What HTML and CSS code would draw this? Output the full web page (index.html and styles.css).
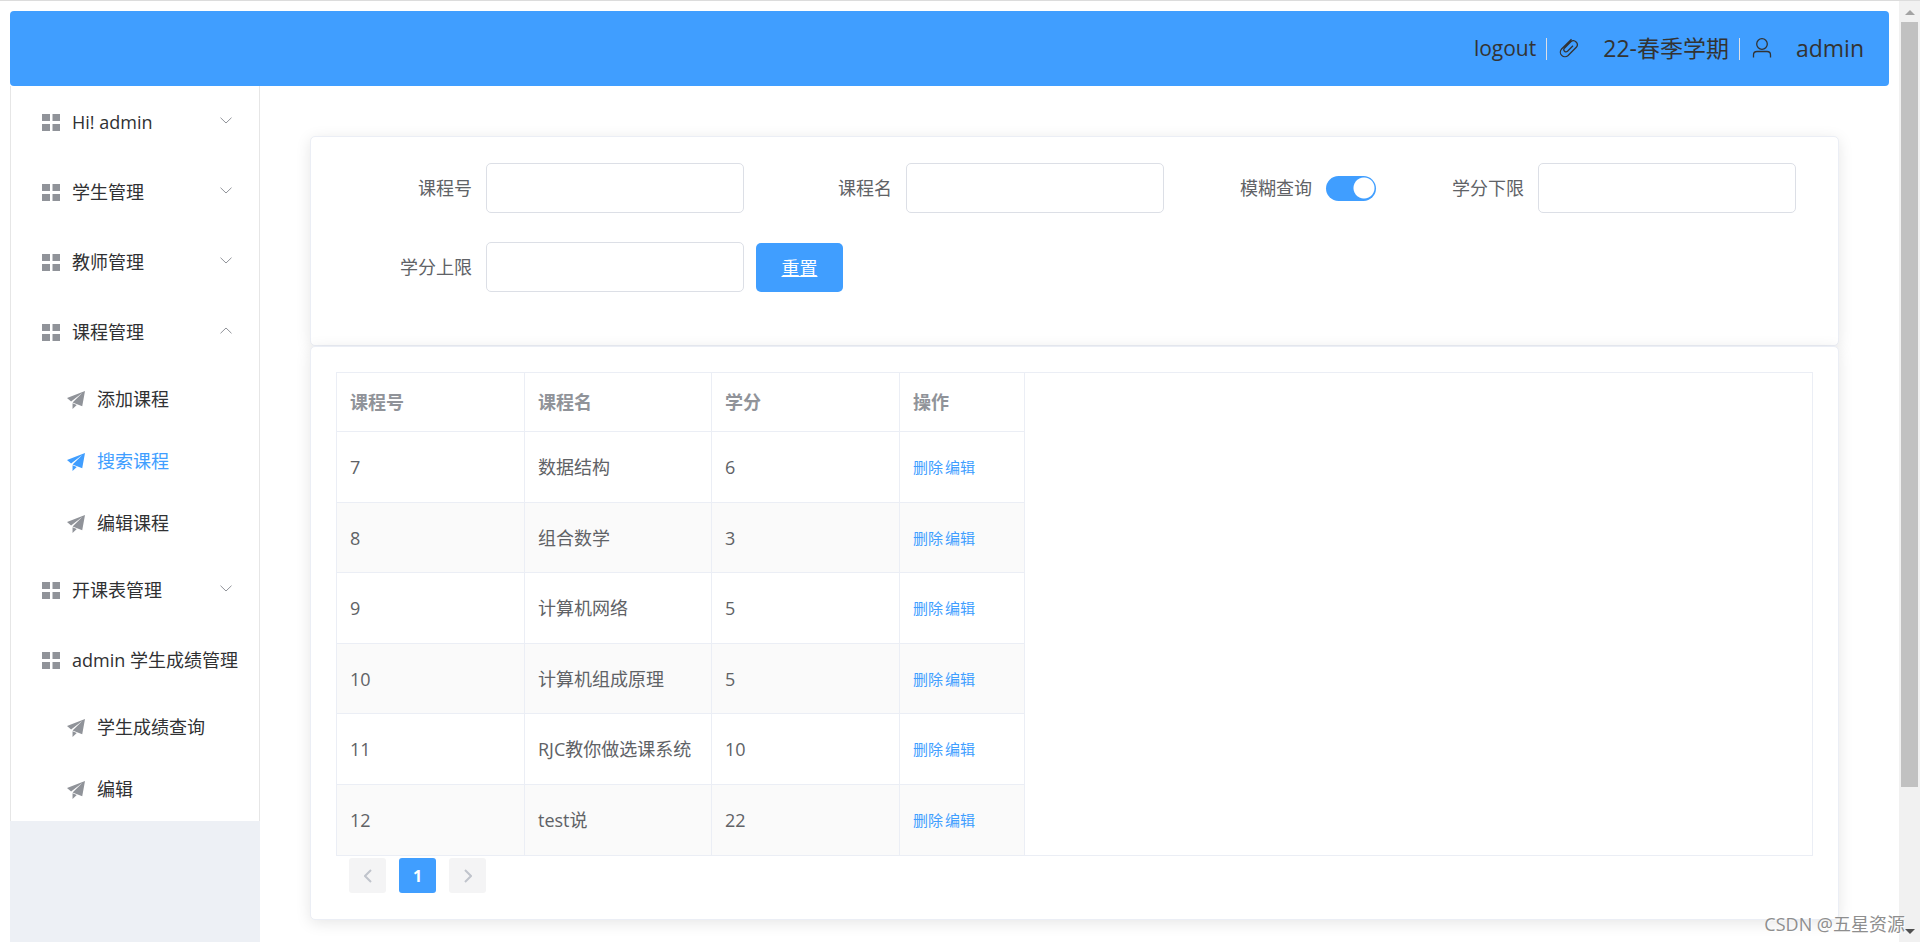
FILE: index.html
```html
<!DOCTYPE html>
<html lang="zh-CN">
<head>
<meta charset="utf-8">
<title>课程管理</title>
<link rel="stylesheet" href="styles.css">
</head>
<body>
<svg class="sprite" aria-hidden="true">
  <symbol id="grid" viewBox="0 0 18 18"><path d="M0 0h8v7H0zM10.500 0h7.500v7h-7.500zM0 10h8v7H0zM10.500 10h7.500v7h-7.500z"/></symbol>
  <symbol id="plane" viewBox="64 128 832 832"><path d="M64 448l832-320-128 704-446-177 458-443-526 401L64 448zm256 512V697l195 78z"/></symbol>
  <symbol id="down" viewBox="0 0 12 7"><path d="M.5.7L6 6 11.500.7"/></symbol>
  <symbol id="up" viewBox="0 0 12 7"><path d="M.5 6.300L6 1l5.500 5.300"/></symbol>
  <symbol id="clip" viewBox="0 0 20 20"><path d="M12.500 1.200L2.600 11a4.600 4.600 0 0 0 6.500 6.500l8.200-8.200a3.900 3.900 0 0 0-5.500-5.500L5.400 10.200a2.200 2.200 0 0 0 3.100 3.100L14 7.800"/></symbol>
  <symbol id="user" viewBox="0 0 20 20"><circle cx="10" cy="6" r="5.300"/><path d="M1.500 19.500v-2.500q0-3.500 3.500-3.500h10q3.500 0 3.500 3.500v2.500"/></symbol>
</svg>
<div class="window">
  <div class="page">
    <header class="topbar">
      <a class="logout" href="#">logout</a>
      <span class="divider"></span>
      <svg class="top-icon"><use href="#clip"/></svg>
      <span>22-春季学期</span>
      <span class="divider"></span>
      <svg class="top-icon"><use href="#user"/></svg>
      <span>admin</span>
    </header>
    <div class="body">
      <aside class="sidebar">
        <nav class="menu">
          <button class="menu-item" type="button"><svg class="icon"><use href="#grid"/></svg>Hi! admin<svg class="arrow"><use href="#down"/></svg></button>
          <button class="menu-item" type="button"><svg class="icon"><use href="#grid"/></svg>学生管理<svg class="arrow"><use href="#down"/></svg></button>
          <button class="menu-item" type="button"><svg class="icon"><use href="#grid"/></svg>教师管理<svg class="arrow"><use href="#down"/></svg></button>
          <button class="menu-item" type="button"><svg class="icon"><use href="#grid"/></svg>课程管理<svg class="arrow"><use href="#up"/></svg></button>
          <div class="submenu">
            <a class="sub-item" href="#"><svg class="icon"><use href="#plane"/></svg>添加课程</a>
            <a class="sub-item active" href="#"><svg class="icon"><use href="#plane"/></svg>搜索课程</a>
            <a class="sub-item" href="#"><svg class="icon"><use href="#plane"/></svg>编辑课程</a>
          </div>
          <button class="menu-item" type="button"><svg class="icon"><use href="#grid"/></svg>开课表管理<svg class="arrow"><use href="#down"/></svg></button>
          <button class="menu-item" type="button"><svg class="icon"><use href="#grid"/></svg>admin 学生成绩管理<svg class="arrow"><use href="#up"/></svg></button>
          <div class="submenu">
            <a class="sub-item" href="#"><svg class="icon"><use href="#plane"/></svg>学生成绩查询</a>
            <a class="sub-item" href="#"><svg class="icon"><use href="#plane"/></svg>编辑</a>
          </div>
        </nav>
      </aside>
      <main class="main">
        <form class="card search">
          <div class="field"><label for="cid">课程号</label><input class="text" id="cid" type="text"></div>
          <div class="field"><label for="cname">课程名</label><input class="text" id="cname" type="text"></div>
          <div class="field"><label for="fuzzy">模糊查询</label><input class="switch" id="fuzzy" type="checkbox" checked></div>
          <div class="field"><label for="low">学分下限</label><input class="text" id="low" type="text"></div>
          <div class="field"><label for="high">学分上限</label><input class="text" id="high" type="text"></div>
          <button class="reset" type="button">重置</button>
        </form>
        <section class="card results">
          <div class="table-box">
            <table>
              <colgroup><col class="c-id"><col class="c-name"><col class="c-credit"><col class="c-act"></colgroup>
              <thead><tr><th>课程号</th><th>课程名</th><th>学分</th><th>操作</th></tr></thead>
              <tbody>
                <tr><td>7</td><td>数据结构</td><td>6</td><td><div class="actions"><a href="#">删除</a><a href="#">编辑</a></div></td></tr>
                <tr><td>8</td><td>组合数学</td><td>3</td><td><div class="actions"><a href="#">删除</a><a href="#">编辑</a></div></td></tr>
                <tr><td>9</td><td>计算机网络</td><td>5</td><td><div class="actions"><a href="#">删除</a><a href="#">编辑</a></div></td></tr>
                <tr><td>10</td><td>计算机组成原理</td><td>5</td><td><div class="actions"><a href="#">删除</a><a href="#">编辑</a></div></td></tr>
                <tr><td>11</td><td>RJC教你做选课系统</td><td>10</td><td><div class="actions"><a href="#">删除</a><a href="#">编辑</a></div></td></tr>
                <tr><td>12</td><td>test说</td><td>22</td><td><div class="actions"><a href="#">删除</a><a href="#">编辑</a></div></td></tr>
              </tbody>
            </table>
          </div>
          <div class="pager">
            <button type="button" aria-label="上一页" disabled><svg viewBox="0 0 8 14"><path d="M7 1L1 7l6 6"/></svg></button>
            <button type="button" class="current">1</button>
            <button type="button" aria-label="下一页" disabled><svg viewBox="0 0 8 14"><path d="M1 1l6 6-6 6"/></svg></button>
          </div>
        </section>
      </main>
    </div>
  </div>
  <div class="scrollbar" aria-hidden="true">
    <svg class="tip" viewBox="0 0 10 5"><path d="M0 5l5-5 5 5z"/></svg>
    <div class="track"><div class="thumb"></div></div>
    <svg class="tip end" viewBox="0 0 10 5"><path d="M0 0l5 5 5-5z"/></svg>
  </div>
  <div class="watermark">CSDN @五星资源</div>
</div>
</body>
</html>
```
FILE: styles.css
```css
* { box-sizing: border-box; }
body {
  margin: 0;
  background: #fff;
  color: #303133;
  font-family: "Open Sans", "Noto Sans CJK SC", sans-serif;
  font-size: 18px;
  line-height: 24px;
}
a { color: inherit; text-decoration: none; }
button, input { font: inherit; margin: 0; }
.sprite { display: none; }

.window {
  position: relative;
  display: flex;
  height: 100vh;
  overflow: hidden;
  border-top: 1px solid #dcdcdc;
}
.page {
  flex: 1;
  display: flex;
  flex-direction: column;
  padding: 10px 10px 0;
}

/* top bar */
.topbar {
  flex: none;
  display: flex;
  align-items: center;
  justify-content: flex-end;
  height: 75px;
  padding: 0 25px 2px;
  border-radius: 4px;
  background: #409eff;
  color: #333;
  font-size: 23px;
}
.logout { font-size: 21px; }
.divider { width: 1px; height: 22px; margin: 2px 12px 0 10px; background: #dcdfe6; }
.top-icon { width: 20px; height: 20px; margin-right: 24px; fill: none; stroke: #333; stroke-width: 1.3; }

/* sidebar */
.body { flex: 1; display: flex; min-height: 0; }
.sidebar { flex: none; width: 250px; background: #edf0f5; }
.menu { padding-top: 1px; background: #fff; border-left: 1px solid #e6e6e6; border-right: 1px solid #e6e6e6; }
.menu-item, .sub-item {
  position: relative;
  display: flex;
  align-items: center;
  width: 100%;
  border: 0;
  background: none;
  color: #303133;
  white-space: nowrap;
}
.menu-item { height: 70px; padding: 0 25px 0 31px; }
.sub-item { height: 62px; padding-left: 56px; }
.submenu { padding: 1px 0; }
.icon { flex: none; width: 18px; height: 18px; margin: 2px 12px 0 0; fill: #909399; }
.sub-item.active { color: #409eff; }
.active .icon { fill: #409eff; }
.arrow {
  position: absolute;
  right: 27px;
  top: 30px;
  width: 12px;
  height: 7px;
  fill: none;
  stroke: #909399;
}

/* content */
.main { flex: 1; padding: 50px; }
.card {
  padding: 25px;
  border: 1px solid #ebeef5;
  border-radius: 5px;
  background: #fff;
  box-shadow: 0 3px 15px rgba(0, 0, 0, .1);
}
.search { display: flex; flex-wrap: wrap; gap: 29px 12px; padding: 26px 25px 53px; }
.field { display: flex; align-items: center; height: 50px; }
.field label { width: 150px; padding-right: 14px; text-align: right; color: #606266; }
.text {
  width: 258px;
  height: 50px;
  padding: 0 18px;
  border: 1px solid #dcdfe6;
  border-radius: 5px;
  background: #fff;
}
.switch {
  appearance: none;
  width: 50px;
  height: 25px;
  border-radius: 13px;
  background: radial-gradient(circle at 38px 12px, #fff 10px, #409eff 11px);
}
.reset {
  align-self: flex-end;
  width: 87px;
  height: 49px;
  border: 0;
  border-radius: 5px;
  background: #409eff;
  color: #fff;
  text-decoration: underline;
}

.table-box { border: 1px solid #ebeef5; }
table { table-layout: fixed; width: 688px; border-collapse: separate; border-spacing: 0; color: #606266; }
.c-id, .c-credit { width: 188px; }
.c-name { width: 187px; }
.c-act { width: 125px; }
th, td { padding: 0 12px 0 13px; border-right: 1px solid #ebeef5; border-bottom: 1px solid #ebeef5; text-align: left; white-space: nowrap; }
th { height: 59px; color: #909399; font-weight: 700; }
td { height: 70px; }
tr:nth-child(odd) td { height: 71px; }
tr:nth-child(even) td { background: #fafafa; }
tr:last-child td { border-bottom: 0; }
.actions { display: flex; gap: 2px; color: #409eff; font-size: 15px; }

.pager { display: flex; gap: 13px; padding: 2px 13px 1px; }
.pager button {
  display: grid;
  place-items: center;
  width: 37px;
  height: 35px;
  padding: 0;
  border: 0;
  border-radius: 3px;
  background: #f4f4f5;
  font-size: 16px;
  font-weight: 700;
}
.pager svg { width: 8px; height: 14px; fill: none; stroke: #c0c4cc; stroke-width: 2; }
.pager .current { background: #409eff; color: #fff; }

/* window scrollbar */
.scrollbar {
  flex: none;
  display: flex;
  flex-direction: column;
  align-items: center;
  width: 21px;
  padding: 9px 0 8px;
  background: #f1f1f1;
}
.tip { width: 10px; height: 5px; fill: #a3a3a3; }
.end { fill: #505050; }
.track { flex: 1; width: 17px; padding: 7px 0; }
.thumb { height: 85%; background: #c1c1c1; }

.watermark {
  position: absolute;
  right: 15px;
  bottom: 6px;
  color: #8e8e8e;
  text-shadow: 1px 1px 1px #fff;
}
```
